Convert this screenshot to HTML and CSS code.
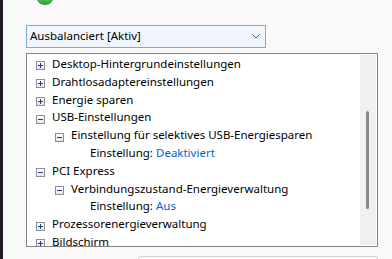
FILE: index.html
```html
<!DOCTYPE html>
<html lang="de">
    <head>
        <meta charset="UTF-8" />
        <meta name="viewport" content="width=device-width, initial-scale=1.0" />
        <title>Energieoptionen</title>
        <link rel="stylesheet" href="styles.css">
    </head>

    <body>
        <div class="window">
            <div class="edge"></div>
            <div class="pane">
                <div class="head">
                    <svg class="plan-icon" width="16" height="6" viewBox="0 0 16 6">
                        <defs>
                            <linearGradient id="g" x1="0" y1="0" x2="0" y2="1">
                                <stop offset="0" stop-color="#7fd86f" />
                                <stop offset="1" stop-color="#2f9e3a" />
                            </linearGradient>
                        </defs>
                        <ellipse cx="8" cy="-1" rx="7.5" ry="5.5" fill="url(#g)" stroke="#2a8a33" stroke-width="0.8" />
                    </svg>
                </div>

                <div class="combo">
                    <span>Ausbalanciert [Aktiv]</span>
                    <svg class="chev" width="8" height="5" viewBox="0 0 8 5">
                        <path d="M0.5 0.5 L4 4 L7.5 0.5" fill="none" stroke="#555" stroke-width="1" />
                    </svg>
                </div>

                <div class="tree">
                    <ul class="items">
                        <li class="row"><i class="exp plus"></i>Desktop-Hintergrundeinstellungen</li>
                        <li class="row"><i class="exp plus"></i>Drahtlosadaptereinstellungen</li>
                        <li class="row"><i class="exp plus"></i>Energie sparen</li>
                        <li class="row"><i class="exp minus"></i>USB-Einstellungen</li>
                        <li class="row lvl1"><i class="exp minus"></i>Einstellung für selektives USB-Energiesparen</li>
                        <li class="row lvl2"><span class="key">Einstellung:</span><span class="val">Deaktiviert</span></li>
                        <li class="row"><i class="exp minus"></i>PCI Express</li>
                        <li class="row lvl1"><i class="exp minus"></i>Verbindungszustand-Energieverwaltung</li>
                        <li class="row lvl2"><span class="key">Einstellung:</span><span class="val">Aus</span></li>
                        <li class="row"><i class="exp plus"></i>Prozessorenergieverwaltung</li>
                        <li class="row"><i class="exp plus"></i>Bildschirm</li>
                    </ul>
                    <div class="scroll">
                        <div class="thumb"></div>
                    </div>
                </div>

                <div class="btn"></div>
            </div>
        </div>
    </body>
</html>
```

FILE: styles.css
```css
html,
body {
    overflow: hidden;
}

body,
ul,
li {
    margin: 0;
    padding: 0;
}

body {
    color: #000;
    background: #f9f9f9;
    font: 11.5px "Noto Sans", sans-serif;
}

.window {
    display: flex;
    height: 259px;
}

.edge {
    width: 3px;
    flex: none;
    background: #251b26;
}

.pane {
    padding-left: 23px;
}

.head {
    height: 25px;
}

.plan-icon {
    display: block;
    margin-left: 11px;
}

/* Auswahlfeld für den Energiesparplan */
.combo {
    display: flex;
    align-items: center;
    justify-content: space-between;
    width: 230px;
    height: 21px;
    padding: 0 5px 0 3px;
    border: 1px solid #7ea9d6;
    background: #f0f6fc;
    line-height: 19px;
}

.combo span {
    padding-bottom: 2px;
}

.chev {
    display: block;
}

.tree {
    display: flex;
    width: 350px;
    height: 192px;
    margin-top: 5px;
    border: 1px solid #858585;
    background: #fff;
}

.items {
    flex: 1;
    list-style: none;
    padding-top: 1px;
    overflow: hidden;
}

.row {
    display: flex;
    align-items: center;
    height: 17.8px;
    line-height: 17.8px;
    padding-left: 9px;
    white-space: nowrap;
}

.row.lvl1 {
    padding-left: 28px;
}

.row.lvl2 {
    padding-left: 63px;
}

/* Plus-/Minus-Kästchen */
.exp {
    flex: none;
    width: 7px;
    height: 7px;
    margin: 4px 7px 0 0;
    border: 1px solid #8e8f8f;
    background: linear-gradient(#1e3d86, #1e3d86) no-repeat 1px 3px / 5px 1px, linear-gradient(#fff, #e6e6e6);
}

.exp.plus {
    background: linear-gradient(#1e3d86, #1e3d86) no-repeat 1px 3px / 5px 1px, linear-gradient(#1e3d86, #1e3d86) no-repeat 3px 1px / 1px 5px, linear-gradient(#fff, #e6e6e6);
}

.key {
    display: inline-block;
    width: 66px;
}

.val {
    color: #0066cc;
}

.scroll {
    flex: none;
    width: 16px;
    margin: 1px 1px 1px 0;
    background: #f0f0f0;
}

.thumb {
    width: 3px;
    height: 98px;
    margin: 56px 0 0 6px;
    border-radius: 2px;
    background: #8a8a8a;
}

/* unterer Knopf, nur die Oberkante ist sichtbar */
.btn {
    width: 238px;
    height: 2px;
    margin: 9px 0 0 112px;
    border: 1px solid #d0d0d0;
    border-bottom: none;
    border-radius: 4px 4px 0 0;
    background: #fdfdfd;
}
```
